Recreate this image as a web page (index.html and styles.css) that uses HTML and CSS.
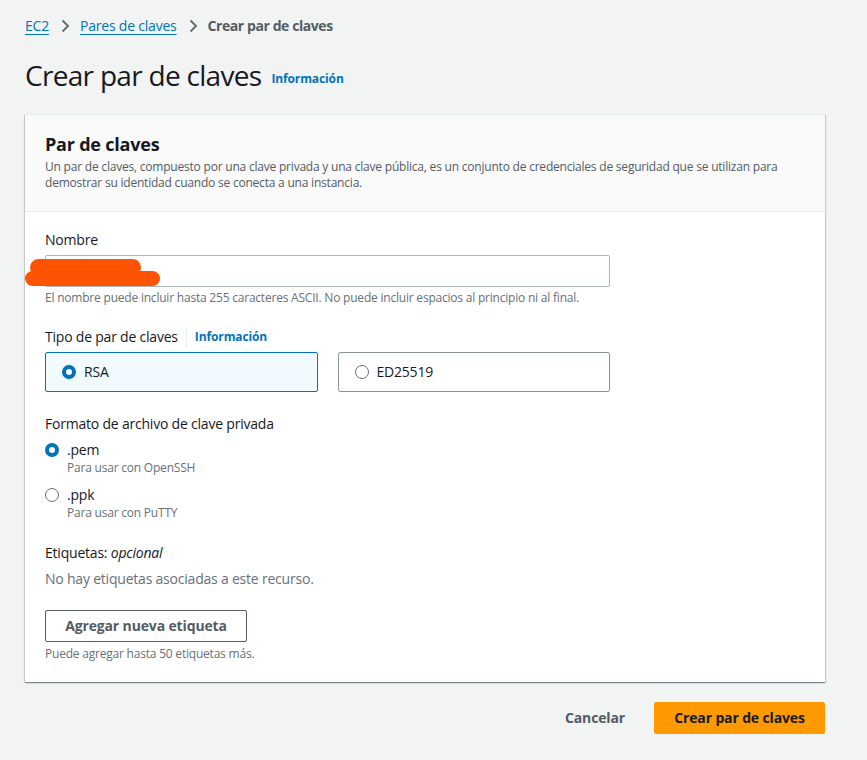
FILE: index.html
```html
<!DOCTYPE html>
<html lang="es">
<head>
<meta charset="utf-8">
<title>Crear par de claves</title>
<link rel="stylesheet" href="styles.css">
</head>
<body>
<div class="page">
  <nav class="crumbs">
    <a class="crumb-link" href="#">EC2</a>
    <svg class="chev" width="16" height="16" viewBox="0 0 16 16"><path d="M5.5 2.5 11 8l-5.5 5.5" fill="none" stroke="#687078" stroke-width="2"/></svg>
    <a class="crumb-link" href="#">Pares de claves</a>
    <svg class="chev" width="16" height="16" viewBox="0 0 16 16"><path d="M5.5 2.5 11 8l-5.5 5.5" fill="none" stroke="#687078" stroke-width="2"/></svg>
    <span class="crumb-current">Crear par de claves</span>
  </nav>

  <h1 class="title">Crear par de claves <a class="info title-info" href="#">Información</a></h1>

  <section class="card">
    <header class="card-head">
      <h2 class="card-title">Par de claves</h2>
      <p class="card-desc">Un par de claves, compuesto por una clave privada y una clave pública, es un conjunto de credenciales de seguridad que se utilizan para demostrar su identidad cuando se conecta a una instancia.</p>
    </header>
    <div class="card-body">
      <div class="field">
        <label class="label">Nombre</label>
        <div class="input-wrap">
          <div class="input"></div>
          <span class="redact r1"></span>
          <span class="redact r2"></span>
        </div>
        <p class="hint">El nombre puede incluir hasta 255 caracteres ASCII. No puede incluir espacios al principio ni al final.</p>
      </div>

      <div class="field gap-lg">
        <div class="label row">Tipo de par de claves <a class="info sep" href="#">Información</a></div>
        <div class="tiles">
          <div class="tile selected"><span class="radio on"></span><span>RSA</span></div>
          <div class="tile"><span class="radio"></span><span>ED25519</span></div>
        </div>
      </div>

      <div class="field gap-lg">
        <div class="label">Formato de archivo de clave privada</div>
        <div class="options">
          <div class="option">
            <span class="radio on"></span>
            <div class="opt-text">
              <div class="opt-label">.pem</div>
              <div class="opt-desc">Para usar con OpenSSH</div>
            </div>
          </div>
          <div class="option">
            <span class="radio"></span>
            <div class="opt-text">
              <div class="opt-label">.ppk</div>
              <div class="opt-desc">Para usar con PuTTY</div>
            </div>
          </div>
        </div>
      </div>

      <div class="field gap-lg">
        <div class="label">Etiquetas: <i>opcional</i></div>
        <p class="empty">No hay etiquetas asociadas a este recurso.</p>
        <button class="btn-normal">Agregar nueva etiqueta</button>
        <p class="hint tight">Puede agregar hasta 50 etiquetas más.</p>
      </div>
    </div>
  </section>

  <div class="actions">
    <button class="btn-link">Cancelar</button>
    <button class="btn-primary">Crear par de claves</button>
  </div>
</div>
</body>
</html>
```
FILE: styles.css
```css
* { box-sizing: border-box; }
body {
  margin: 0;
  background: #f2f3f3;
  font-family: "Open Sans", "Noto Sans", sans-serif;
  color: #16191f;
  font-size: 14px;
  line-height: 20px;
  letter-spacing: -0.015em;
}
.page {
  width: 800px;
  margin-left: 25px;
  padding-top: 16px;
}
.crumbs {
  display: flex;
  align-items: center;
  height: 20px;
}
.crumb-link {
  color: #0073bb;
  text-decoration: underline;
  text-underline-offset: 3px;
}
.chev { margin: 0 7px 0 8px; }
.crumb-current {
  color: #545b64;
  font-weight: 700;
  letter-spacing: -0.03em;
}
.title {
  display: flex;
  align-items: baseline;
  gap: 10px;
  margin: 21px 0 0;
  height: 36px;
  font-size: 28px;
  line-height: 36px;
  font-weight: 400;
  letter-spacing: -0.025em;
}
.info {
  color: #0073bb;
  font-size: 12px;
  font-weight: 700;
  text-decoration: none;
  letter-spacing: -0.01em;
  line-height: 16px;
}
.title-info {
  align-self: flex-end;
  margin-bottom: 6px;
}
.card {
  margin-top: 21px;
  background: #fff;
  border-top: 1px solid #eaeded;
  box-shadow: 0 1px 1px 0 rgba(0,28,36,.3), 1px 1px 1px 0 rgba(0,28,36,.15), -1px 1px 1px 0 rgba(0,28,36,.15);
}
.card-head {
  background: #fafafa;
  border-bottom: 1px solid #eaeded;
  padding: 18px 20px 20px;
}
.card-title {
  margin: 0;
  font-size: 18px;
  line-height: 22px;
  font-weight: 700;
}
.card-desc {
  margin: 4px 0 0;
  font-size: 12px;
  line-height: 16px;
  color: #545b64;
}
.card-body {
  padding: 18px 20px 20px;
}
.field { width: 565px; display: flex; flex-direction: column; align-items: flex-start; }
.gap-lg { margin-top: 22px; }
.label.row { display: flex; align-items: center; }
.input-wrap {
  position: relative;
  width: 565px;
  margin-top: 5px;
}
.input {
  height: 32px;
  border: 1px solid #aab7b8;
  border-radius: 2px;
  background: #fff;
}
.redact {
  position: absolute;
  background: #fe5300;
  border-radius: 9px;
}
.r1 { left: -15px; top: 4px; width: 111px; height: 17px; }
.r2 { left: -20px; top: 16px; width: 135px; height: 15px; }
.hint {
  margin: 3px 0 0;
  font-size: 12px;
  line-height: 16px;
  color: #687078;
}
.hint.tight { margin-top: 4px; }
.gap-lg:nth-child(2) { margin-top: 21px; }
.info.sep {
  margin-left: 8px;
  padding-left: 8px;
  border-left: 1px solid #eaeded;
  line-height: 20px;
}
.tiles {
  display: grid;
  grid-template-columns: 1fr 1fr;
  gap: 20px;
  width: 565px;
  margin-top: 5px;
}
.tile {
  height: 40px;
  border: 1px solid #879596;
  border-radius: 2px;
  display: flex;
  align-items: center;
  gap: 8px;
  padding-left: 16px;
  background: #fff;
}
.tile.selected {
  border-color: #0073bb;
  background: #f1faff;
}
.radio {
  width: 14px;
  height: 14px;
  border-radius: 50%;
  border: 1.5px solid #687078;
  background: #fff;
  flex: none;
}
.radio.on {
  border: 4px solid #0073bb;
}
.options {
  display: flex;
  flex-direction: column;
  gap: 9px;
  margin-top: 6px;
}
.option {
  display: flex;
  align-items: flex-start;
  gap: 8px;
}
.option .radio { margin-top: 3px; }
.opt-desc {
  font-size: 12px;
  line-height: 16px;
  color: #687078;
}
.empty {
  margin: 6px 0 0;
  color: #687078;
}
.btn-normal {
  margin-top: 21px;
  height: 32px;
  width: 202px;
  padding: 0;
  white-space: nowrap;
  background: #fff;
  border: 1px solid #545b64;
  border-radius: 2px;
  font: inherit;
  font-weight: 700;
  letter-spacing: -0.01em;
  color: #545b64;
}
.actions {
  display: flex;
  justify-content: flex-end;
  gap: 8px;
  margin-top: 20px;
}
.btn-link, .btn-primary {
  height: 32px;
  padding: 0 20px;
  white-space: nowrap;
  font: inherit;
  font-weight: 700;
  letter-spacing: -0.01em;
  border-radius: 2px;
  border: 1px solid transparent;
}
.btn-link {
  background: transparent;
  color: #545b64;
}
.btn-primary {
  background: #ff9900;
  border-color: #ff9900;
  color: #16191f;
  width: 171px;
  padding: 0;
}
```
